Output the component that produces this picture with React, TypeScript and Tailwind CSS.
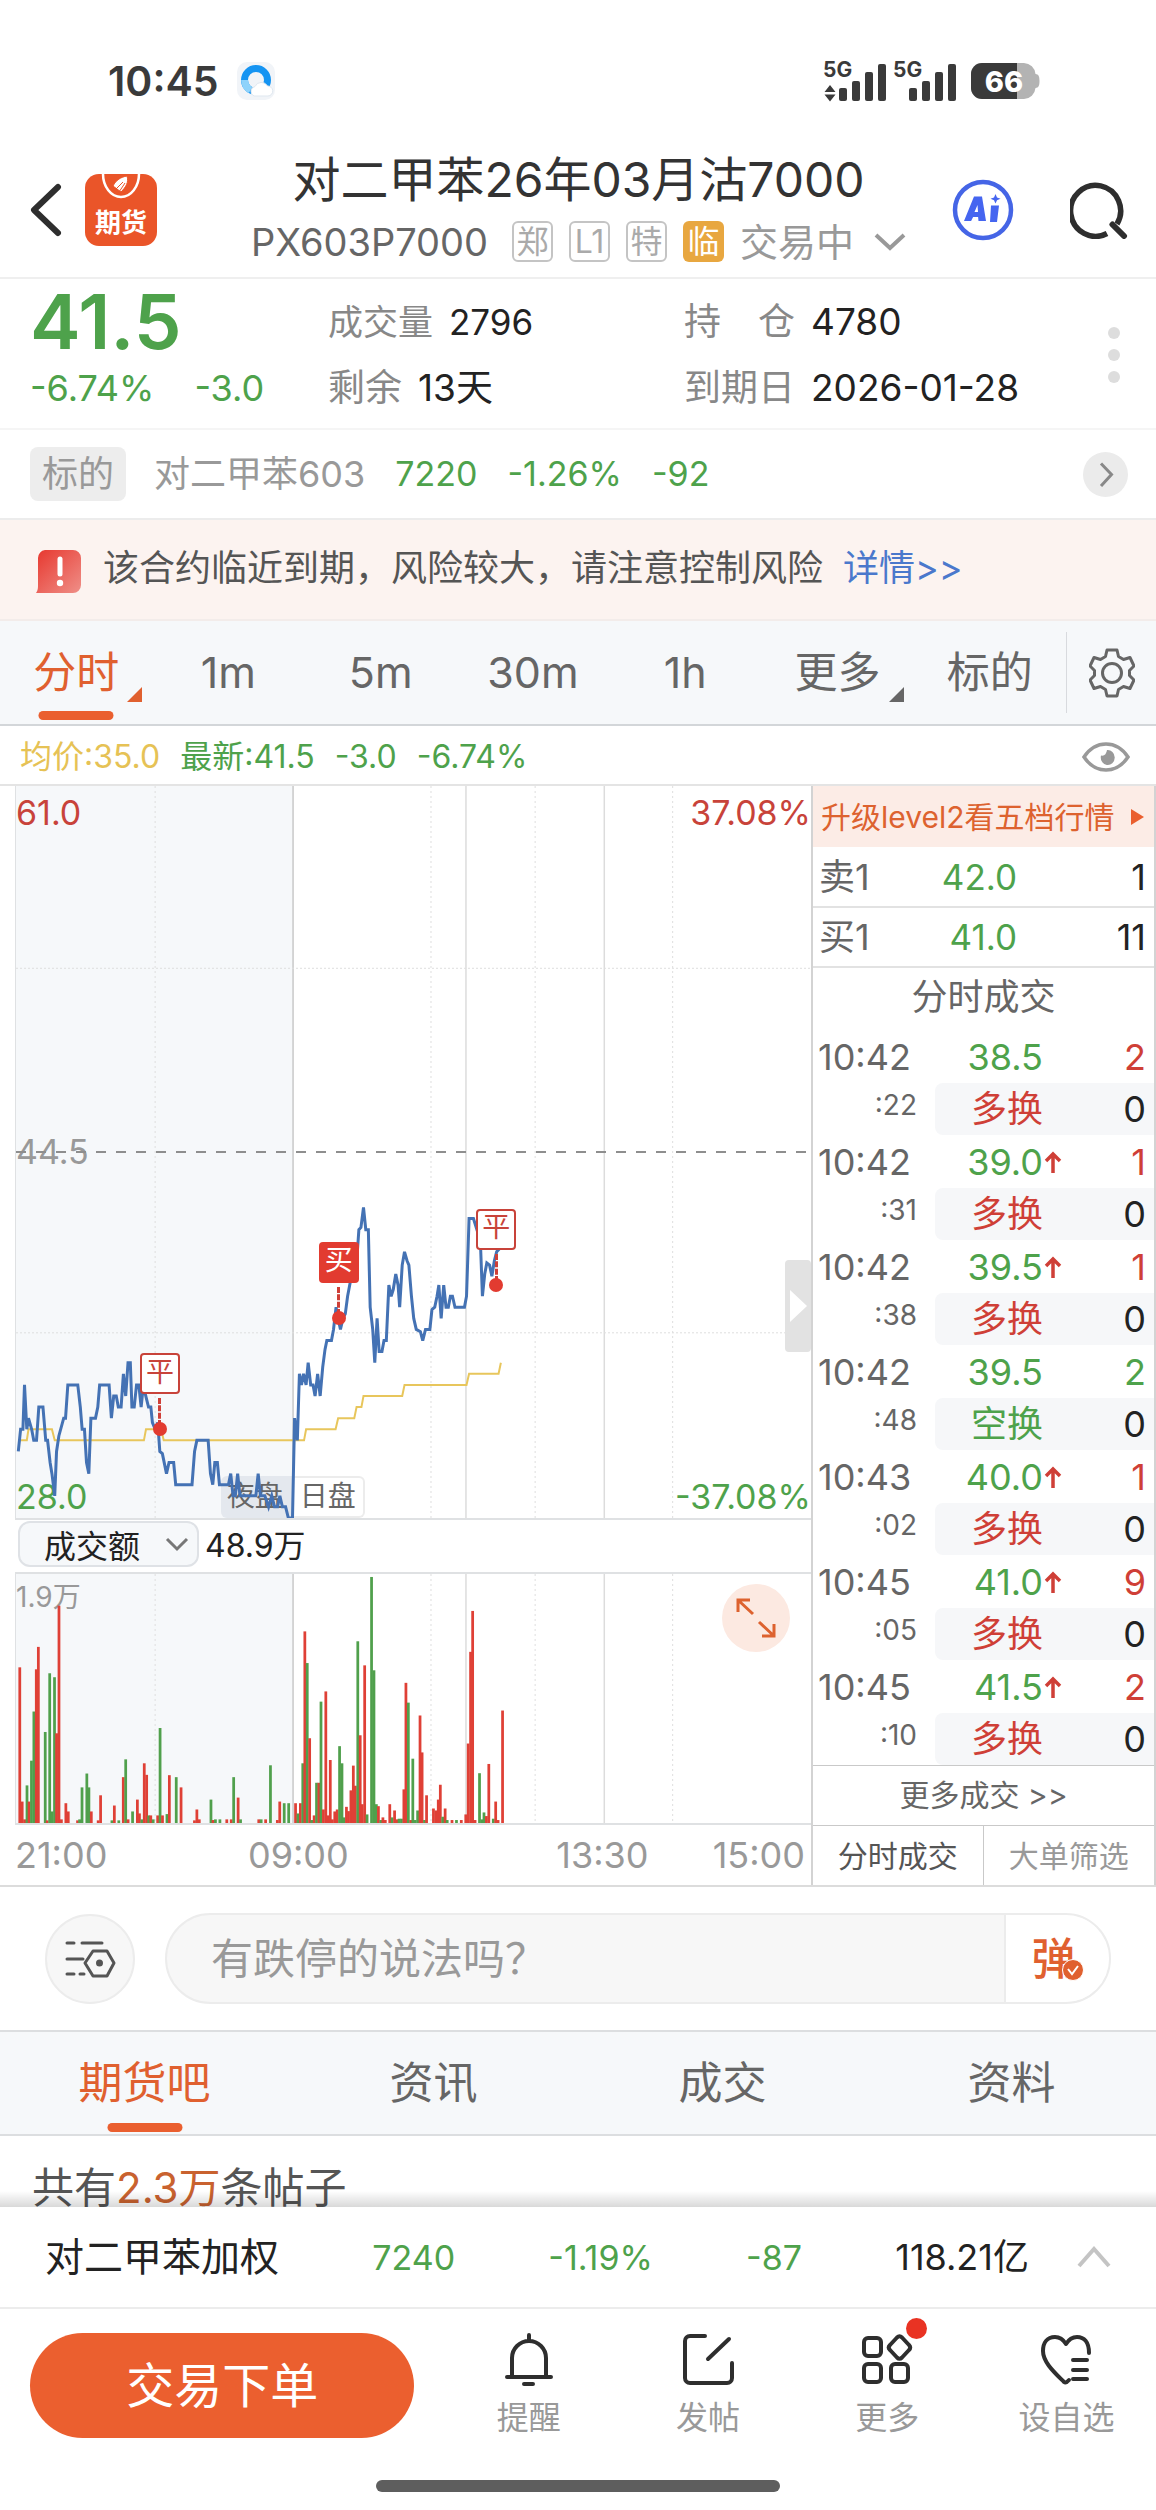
import React from "react";

type Point = [number, number];

const SESSION_MINUTES = 345;
const PRICE_LOW = 28;
const PRICE_HIGH = 61;

// [minute since the night open, price]
const prices: Point[] = [
  [1, 31], [2, 32], [3, 32], [3.7, 34], [4.7, 32], [5.4, 32.5], [6.8, 32], [7.7, 31.5], [8.9, 31.5], [9.9, 33],
  [11.7, 33], [12.9, 31.5], [13.7, 31.5], [14.8, 30.5], [15.6, 30], [16.8, 29], [17.6, 31], [18.6, 31.7], [20.7, 32.5],
  [21.5, 32.5], [22.5, 34], [26.8, 34], [27.9, 33], [28.7, 32], [29.7, 32], [30.6, 30.5], [31.6, 30], [32.5, 32.5],
  [34.5, 32.5], [35.5, 33], [36.3, 34], [40.4, 34], [41.4, 32.5], [42.4, 33.5], [43.5, 33.5], [44.4, 33], [45.6, 33],
  [46.6, 34.5], [47.6, 33.5], [48.6, 35], [49.6, 35], [50.3, 33], [51.3, 33], [52.3, 34], [53.3, 34], [54.3, 33],
  [55.3, 34], [56.3, 33.5], [57.5, 33], [58.5, 33], [59.2, 32.3], [60.4, 32], [61.5, 32.3], [62.4, 31], [63.5, 30.9],
  [65.3, 30], [66.4, 30.5], [68.4, 30.5], [69.3, 29.5], [76.4, 29.5], [77.5, 31], [78.5, 31.5], [83.4, 31.5],
  [84.4, 30], [85.4, 29.5], [86.3, 30.5], [87.4, 30.5], [88.3, 29.5], [92.2, 29.5], [93.2, 30], [94.2, 29], [95.2, 29],
  [96.2, 30], [97.2, 29], [104.1, 29], [105.1, 30], [106.1, 29], [108, 29], [109.6, 28.5], [111, 29], [112.2, 28.5],
  [113.5, 28.5], [114.5, 29], [115.6, 28.5], [117, 28.5], [118.2, 28], [120, 28], [120.9, 32.5], [122.1, 31.5],
  [123, 34.5], [123.9, 34], [124.8, 34.5], [125.9, 34], [126.8, 35], [127.9, 34], [128.9, 34], [129.8, 33.5],
  [130.9, 34.5], [132, 33.5], [133.1, 34.8], [134.1, 35.6], [134.9, 36], [136.9, 36], [137.8, 36.5], [138.9, 37.5],
  [139.8, 37], [140.8, 36.5], [141.9, 37], [142.9, 37.2], [143.9, 38], [145, 38.6], [146, 39.5], [147.8, 39.5],
  [148.8, 41], [149.7, 41.1], [150.8, 42], [151.8, 41], [152.9, 41], [153.7, 37.5], [154.8, 36.5], [155.7, 35],
  [156.7, 37], [157.6, 35.5], [158.8, 35.5], [159.7, 36], [160.7, 36], [161.8, 38.5], [162.8, 38], [163.7, 38.3],
  [164.8, 39], [165.8, 38.5], [166.5, 37.5], [167.6, 39.4], [168.6, 40], [169.7, 39.6], [170.5, 39.4], [171.6, 38],
  [172.6, 37], [173.7, 36.5], [175.5, 36.4], [176.5, 36], [177.7, 36.5], [179.6, 36.5], [180.5, 37.4], [181.7, 37.5],
  [182.7, 38], [183.5, 38.5], [184.5, 37], [185.6, 38.5], [186.6, 37.5], [187.6, 37.5], [188.5, 38], [189.4, 38],
  [190.5, 37.5], [194.6, 37.5], [195.5, 38], [196.6, 41.5], [198.5, 41.5], [201.5, 40.5], [202.4, 38], [203.4, 39],
  [204.3, 39.5], [205.5, 39.4], [206.5, 38.9], [207.6, 39.6], [208.6, 40], [209.5, 40.1], [210.4, 41.5],
];

const averages: Point[] = [
  [1, 31.5], [4.7, 31.5], [5.4, 32], [15.6, 32], [16.8, 31.5], [55.5, 31.5], [56.4, 32], [63, 32], [64.1, 31.5],
  [125, 31.5], [125.9, 32], [138.7, 32], [139.8, 32.5], [146.8, 32.5], [147.8, 33], [149.9, 33], [150.8, 33.5],
  [167.6, 33.5], [168.6, 34], [195.5, 34], [196.6, 34.5], [209.4, 34.5], [210.4, 35],
];

// x, top, direction on a 2312 x 755 canvas whose origin is at (45, 216)
const turnover =
  "56,499,r;63,906,r;70,960,r;77,857,g;83,906,r;90,782,g;97,633,g;104,505,r;110,437,r;130,695,g;136,963,r;143,517,g;150,936,g;157,529,g;163,699,r;170,312,r;177,960,r;190,911,r;197,936,r;224,963,r;230,960,g;237,863,g;251,821,g;257,863,g;264,936,r;284,963,r;291,887,r;324,963,g;331,918,r;344,963,g;357,832,r;364,778,g;371,960,r;384,936,g;398,900,r;404,942,r;411,960,g;418,790,r;425,825,r;431,948,g;437,948,r;444,960,g;457,948,r;464,683,g;471,948,r;484,944,g;491,826,r;511,832,g;525,863,r;564,963,r;571,930,r;578,960,r;612,900,g;618,962,r;625,960,g;638,960,g;658,960,r;671,960,r;678,832,g;691,894,r;698,960,g;751,960,r;758,960,g;771,960,r;785,796,g;805,962,r;812,906,r;825,911,g;838,911,g;858,911,r;865,942,g;872,911,r;879,790,g;885,390,r;892,486,g;899,714,r;905,962,g;912,948,r;919,849,g;926,849,r;932,603,g;939,930,r;946,572,r;952,948,r;959,780,r;965,960,r;972,936,r;979,930,r;986,738,g;993,790,g;999,954,g;1006,922,r;1012,935,r;1019,872,r;1026,797,r;1032,858,r;1039,420,g;1046,705,r;1052,914,r;1059,493,r;1066,945,g;1079,225,g;1086,508,g;1093,914,g;1099,920,r;1106,962,g;1112,954,r;1119,962,r;1132,914,r;1139,954,g;1146,933,r;1152,960,r;1159,958,g;1166,958,g;1173,869,r;1179,546,r;1186,606,g;1193,962,r;1199,776,g;1206,962,g;1213,933,g;1220,645,r;1226,757,r;1233,962,g;1239,887,r;1259,927,r;1266,933,r;1273,900,r;1279,855,r;1286,952,g;1293,927,r;1299,962,g;1313,962,r;1326,962,g;1340,962,r;1353,945,r;1360,730,r;1367,452,r;1373,328,r;1380,962,r;1393,820,g;1400,960,g;1406,939,g;1413,950,r;1420,792,r;1433,958,g;1440,906,r;1447,962,r;1460,630,r";

const trades = [
  { time: "10:42", sec: ":22", price: "38.5", up: false, vol: "2", buy: true, kind: "多换" },
  { time: "10:42", sec: ":31", price: "39.0", up: true, vol: "1", buy: true, kind: "多换" },
  { time: "10:42", sec: ":38", price: "39.5", up: true, vol: "1", buy: true, kind: "多换" },
  { time: "10:42", sec: ":48", price: "39.5", up: false, vol: "2", buy: false, kind: "空换" },
  { time: "10:43", sec: ":02", price: "40.0", up: true, vol: "1", buy: true, kind: "多换" },
  { time: "10:45", sec: ":05", price: "41.0", up: true, vol: "9", buy: true, kind: "多换" },
  { time: "10:45", sec: ":10", price: "41.5", up: true, vol: "2", buy: true, kind: "多换" },
];

const toPath = (pts: Point[]) =>
  pts
    .map(([m, p]) => `${((m / SESSION_MINUTES) * 1000).toFixed(1)},${(((PRICE_HIGH - p) / (PRICE_HIGH - PRICE_LOW)) * 1000).toFixed(1)}`)
    .join(" ");

function StatusBar() {
  return (
    <div className="flex h-[126px] items-center justify-between pt-9 pr-[116px] pl-[108px] text-[#3a3a3a]">
      <div className="flex items-center gap-[18px]">
        <span className="text-[41px] leading-none font-semibold">10:45</span>
        <svg width="38" height="38" viewBox="0 0 38 38" aria-hidden="true">
          <rect width="38" height="38" rx="10" fill="#f1f4f8" />
          <circle cx="19" cy="18" r="11.5" fill="none" stroke="#1594f2" strokeWidth="7" />
          <path d="M7.6 18a11.5 11.5 0 0 0 6 10" fill="none" stroke="#8fd3fb" strokeWidth="7" />
          <path d="M17 34a5 5 0 0 1 1-9.500a7 7 0 0 1 12.500-.5a5 5 0 0 1 .5 10z" fill="#fff" stroke="#dfe7ef" />
        </svg>
      </div>
      <div className="flex items-center">
        <svg width="134" height="46" viewBox="0 0 134 46" fill="#3a3a3a" aria-hidden="true">
          <text x="0" y="19" fontSize="21" fontWeight="700">5G</text>
          <path d="M1.500 34 7 27l5.500 7zM1.500 36.500h11L7 43.500z" />
          <rect x="16" y="30" width="8" height="13" rx="2" />
          <rect x="29" y="23" width="8" height="20" rx="2" />
          <rect x="42" y="14" width="8" height="29" rx="2" />
          <rect x="55" y="6" width="8" height="37" rx="2" />
          <text x="70" y="19" fontSize="21" fontWeight="700">5G</text>
          <rect x="86" y="30" width="8" height="13" rx="2" />
          <rect x="99" y="23" width="8" height="20" rx="2" />
          <rect x="112" y="14" width="8" height="29" rx="2" />
          <rect x="125" y="6" width="8" height="37" rx="2" />
        </svg>
        <svg className="ml-[13px]" width="70" height="38" viewBox="0 0 70 38" aria-hidden="true">
          <path d="M12 1h42a12 12 0 0 1 11.500 11c3 .5 4 2 4 7s-1 6.500-4 7A12 12 0 0 1 54 37H12A11 11 0 0 1 1 26V12A11 11 0 0 1 12 1z" fill="#b3b3b3" />
          <path d="M12 1h35v36H12A11 11 0 0 1 1 26V12A11 11 0 0 1 12 1z" fill="#3a3a3a" />
          <text x="34" y="30" fontSize="29" fontWeight="800" fill="#fff" textAnchor="middle">66</text>
        </svg>
      </div>
    </div>
  );
}

function Tag({ children }: { children: React.ReactNode }) {
  return (
    <span className="flex size-[41px] items-center justify-center rounded-[6px] border-2 border-[#c4c4c4] text-[32px] leading-none text-[#aaa]">
      {children}
    </span>
  );
}

function Header() {
  return (
    <header className="flex h-[153px] items-center border-b-2 border-[#efefef] pr-7 pl-[30px]">
      <button aria-label="返回" className="pt-4">
        <svg width="32" height="54" viewBox="0 0 32 54" fill="none" stroke="#2e2e2e" strokeWidth="6" strokeLinecap="round" strokeLinejoin="round">
          <path d="M28 4 4 27l24 23" />
        </svg>
      </button>
      <a href="#futures" aria-label="期货" className="mt-4 ml-[23px] flex h-[72px] w-[72px] flex-col items-center rounded-[14px] bg-[#ea5529]">
        <svg width="44" height="28" viewBox="0 0 44 28" fill="none" aria-hidden="true">
          <path d="M4 0a18 23 0 0 0 36 0" stroke="#fff" strokeWidth="2.5" />
          <path d="M14 12c3-6 8-9 14-10 2 6-1 11-6 16zM20 18l6-9M17 15l7-7" fill="#fff" stroke="#ea5529" strokeWidth="1" />
        </svg>
        <span className="pt-1 text-[26px] leading-[34px] font-bold text-white">期货</span>
      </a>
      <div className="flex flex-1 flex-col items-center pt-[18px] pl-12">
        <h1 className="text-[48px] leading-[62px] whitespace-nowrap text-[#333]">对二甲苯26年03月沽7000</h1>
        <div className="flex items-center gap-4 leading-[62px]">
          <span className="mr-2 text-[38px] text-[#666]">PX603P7000</span>
          <Tag>郑</Tag>
          <Tag>L1</Tag>
          <Tag>特</Tag>
          <span className="flex size-[41px] items-center justify-center rounded-[6px] bg-[#e8a740] text-[32px] leading-none text-white">临</span>
          <button className="flex items-center gap-5 text-[38px] text-[#999]">
            交易中
            <svg width="32" height="20" viewBox="0 0 32 20" fill="none" stroke="#999" strokeWidth="4" aria-hidden="true">
              <path d="m2 3 14 13L30 3" />
            </svg>
          </button>
        </div>
      </div>
      <button aria-label="AI" className="pt-4">
        <svg width="62" height="62" viewBox="0 0 62 62" aria-hidden="true">
          <circle cx="31" cy="31" r="28" fill="none" stroke="#4565e6" strokeWidth="4.5" />
          <path fillRule="evenodd" fill="#4565f0" d="M22 17.500h8l4 24.500h-7.500l-.4-4h-5l-2 4H12zM25.500 26l-3 7h3.500z" />
          <path d="M39 26.500h8l-2 16.500h-7zM43.500 15l1.500 3.500 3.500 1.200-3.500 1.500-1.500 3.300-1.500-3.300-3.500-1.500 3.500-1.200z" fill="#4565f0" />
        </svg>
      </button>
      <button aria-label="搜索" className="ml-14 pt-4">
        <svg width="58" height="58" viewBox="0 0 58 58" fill="none" stroke="#2e2e2e" strokeWidth="5.5" strokeLinecap="butt" aria-hidden="true">
          <path d="M37 52.500A25 25.500 0 1 1 47 43" />
          <path d="M42.500 43.500 54 55" strokeWidth="6" strokeLinecap="round" />
        </svg>
      </button>
    </header>
  );
}

function Stat({ label, value, compact }: { label: string; value: string; compact?: boolean }) {
  return (
    <div className={compact ? "flex gap-4 text-[35px] whitespace-pre" : "flex gap-4 text-[37px] whitespace-pre"}>
      <dt className="text-[#888]">{label}</dt>
      <dd className="text-[#222]">{value}</dd>
    </div>
  );
}

function Quote() {
  return (
    <section className="flex items-start border-b-2 border-[#f5f5f5] pr-9 pb-[7px] pl-[30px] text-[36px] leading-[66px]">
      <div className="w-[298px] text-[#4ea24b]">
        <p className="h-[78px] text-[76px] leading-[84px] font-semibold">41.5</p>
        <p className="flex gap-10 leading-[62px]">
          <span>-6.74%</span>
          <span>-3.0</span>
        </p>
      </div>
      <dl className="grid flex-1 grid-cols-[356fr_424fr] pt-[10px]">
        <Stat label="成交量" value="2796" compact />
        <Stat label="持　仓" value="4780" />
        <Stat label="剩余" value="13天" />
        <Stat label="到期日" value="2026-01-28" />
      </dl>
      <button aria-label="更多信息" className="mt-12 flex flex-col gap-[10px]">
        <i className="size-3 rounded-full bg-[#ddd]" />
        <i className="size-3 rounded-full bg-[#ddd]" />
        <i className="size-3 rounded-full bg-[#ddd]" />
      </button>
    </section>
  );
}

function Underlying() {
  return (
    <a href="#underlying" className="flex h-[90px] items-center border-b-2 border-[#ececec] pr-7 pl-[30px] text-[34px] leading-[54px] text-[#4ea24b]">
      <span className="rounded-[8px] bg-[#ededed] px-3 text-[36px] text-[#999]">标的</span>
      <span className="ml-7 text-[36px] text-[#999]">对二甲苯603</span>
      <span className="ml-[30px]">7220</span>
      <span className="ml-[30px]">-1.26%</span>
      <span className="ml-[30px]">-92</span>
      <svg className="ml-auto" width="45" height="45" viewBox="0 0 45 45" fill="none" aria-hidden="true">
        <circle cx="22.5" cy="22.5" r="22.5" fill="#ebebeb" />
        <path d="m18 11.500 10.500 11L18 34" stroke="#888" strokeWidth="3" />
      </svg>
    </a>
  );
}

function Warning() {
  return (
    <div className="flex h-[101px] items-center border-b-2 border-[#f3ecea] bg-[#fcf3f0] pr-4 pb-1 pl-9 text-[36px] leading-[54px]">
      <svg className="mt-2 shrink-0" width="45" height="43" viewBox="0 0 45 43" aria-hidden="true">
        <defs>
          <linearGradient id="alert" x1="0" y1="0" x2="1" y2="1">
            <stop offset="0" stopColor="#e7372e" />
            <stop offset="1" stopColor="#ef8f88" />
          </linearGradient>
        </defs>
        <path d="M9 0h28a8 8 0 0 1 8 8v27a8 8 0 0 1-8 8H0c2-3 2-5 2-8V8a8 8 0 0 1 7-8z" fill="url(#alert)" />
        <path d="M24 9v15" stroke="#fff" strokeWidth="5" strokeLinecap="round" />
        <circle cx="24" cy="33" r="3.2" fill="#fff" />
      </svg>
      <p className="ml-[22px] whitespace-nowrap text-[#555]">
        该合约临近到期，风险较大，请注意控制风险
        <a href="#detail" className="ml-5 text-[#4a78cc]">详情&gt;&gt;</a>
      </p>
    </div>
  );
}

const periods = ["分时", "1m", "5m", "30m", "1h", "更多", "标的"];

function PeriodTabs() {
  return (
    <nav className="flex h-[105px] items-center border-b-2 border-[#d3d6d9] bg-[#f6f8fa] text-[43px] text-[#666]">
      <div className="grid h-full flex-1 grid-cols-7">
        {periods.map((p, i) => (
          <button key={p} className={i === 0 ? "relative text-[#e0602f]" : "relative"}>
            {p}
            {(i === 0 || i === 5) && (
              <svg className="absolute right-[10px] bottom-[22px]" width="15" height="15" viewBox="0 0 15 15" fill="currentColor" aria-hidden="true">
                <path d="M15 0v15H0z" />
              </svg>
            )}
            {i === 0 && <i className="absolute bottom-1 left-1/2 h-[9px] w-[75px] -translate-x-1/2 rounded-full bg-[#ea5f2f]" />}
          </button>
        ))}
      </div>
      <button aria-label="设置" className="flex h-[81px] w-[90px] items-center justify-center border-l border-[#d8dade]">
        <svg width="46" height="50" viewBox="0 0 46 50" fill="none" stroke="#666" strokeWidth="3" strokeLinejoin="round" aria-hidden="true">
          <path d="M18 2h10l1.500 6.500 5 3 6.500-2 4 8.500-4.500 4.500v5L45 32l-4 8.500-6.500-2-5 3L28 48H18l-1.500-6.500-5-3-6.500 2L1 32l4.500-4.500v-5L1 18l4-8.500 6.500 2 5-3z" />
          <circle cx="23" cy="25" r="9.5" />
        </svg>
      </button>
    </nav>
  );
}

function LegendRow() {
  return (
    <div className="flex h-[60px] items-center border-b-2 border-[#e4e4e4] pt-1 pr-[26px] pl-5 text-[32px] text-[#4ea24b]">
      <span className="text-[#e6c255]">均价:35.0</span>
      <span className="ml-5">最新:41.5</span>
      <span className="ml-5">-3.0</span>
      <span className="ml-5">-6.74%</span>
      <button aria-label="显示设置" className="ml-auto">
        <svg width="48" height="30" viewBox="0 0 48 30" fill="none" aria-hidden="true">
          <path d="M2 15C8 6 15 2 24 2s16 4 22 13c-6 9-13 13-22 13S8 24 2 15z" stroke="#999" strokeWidth="3.5" />
          <path d="M25 8a7 7.500 0 1 1-6 5.500q5 1 6-5.500z" fill="#999" />
        </svg>
      </button>
    </div>
  );
}

function GridLines() {
  const solid = [566, 740];
  const dotted = [175, 522, 653, 826];
  return (
    <g>
      {dotted.map((x) => (
        <line key={x} x1={x} x2={x} y1="0" y2="1000" stroke="#dedede" strokeWidth="1" strokeDasharray="2 3" vectorEffect="non-scaling-stroke" />
      ))}
      {solid.map((x) => (
        <line key={x} x1={x} x2={x} y1="0" y2="1000" stroke="#dcdcdc" strokeWidth="1.5" vectorEffect="non-scaling-stroke" />
      ))}
      <line x1="348.5" x2="348.5" y1="0" y2="1000" stroke="#c9c9c9" strokeWidth="1.5" vectorEffect="non-scaling-stroke" />
    </g>
  );
}

function Marker({ label, filled, place }: { label: string; filled?: boolean; place: string }) {
  return (
    <div className={`absolute flex w-10 -translate-x-1/2 -translate-y-full flex-col items-center ${place}`}>
      <span
        className={
          filled
            ? "flex h-[41px] w-10 items-center justify-center rounded-[4px] bg-[#e23b30] pb-1 text-[28px] leading-none text-white"
            : "flex h-[41px] w-10 items-center justify-center rounded-[4px] border-2 border-[#c8433a] bg-white pb-1 text-[28px] leading-none text-[#c8433a]"
        }
      >
        {label}
      </span>
      <i className="mt-1 h-7 border-l-[3px] border-dashed border-[#cf3f37]" />
      <i className="-mt-1 size-[14px] rounded-full bg-[#e23b30]" />
    </div>
  );
}

function PriceChart() {
  return (
    <div className="relative h-[734px] border-b-2 border-l border-[#dfe1e3] text-[34px] leading-none">
      <svg className="absolute inset-0 h-full w-full" viewBox="0 0 1000 1000" preserveAspectRatio="none" aria-hidden="true">
        <rect width="348.5" height="1000" fill="#f6f8fa" />
        <GridLines />
        {[249, 747].map((y) => (
          <line key={y} x1="0" x2="1000" y1={y} y2={y} stroke="#dedede" strokeWidth="1" strokeDasharray="2 2" vectorEffect="non-scaling-stroke" />
        ))}
      </svg>
      <div className="absolute bottom-0 left-[34.8%] flex h-[42px] -translate-x-1/2 text-center text-[28px] leading-[40px] text-[#666]">
        <span className="w-[72px] rounded-l-[6px] bg-[#e4e8ee] pr-1">夜盘</span>
        <span className="w-[72px] rounded-r-[6px] border-2 border-l-0 border-[#ececec] bg-white leading-[36px]">日盘</span>
      </div>
      <span className="absolute top-[10px] left-0 text-[#c8433a]">61.0</span>
      <span className="absolute top-[10px] right-0 text-[#c8433a]">37.08%</span>
      <span className="absolute top-1/2 left-0 -translate-y-1/2 text-[#999]">44.5</span>
      <span className="absolute bottom-1 left-0 text-[#4ea24b]">28.0</span>
      <span className="absolute right-0 bottom-1 text-[#4ea24b]">-37.08%</span>
      <svg className="absolute inset-0 h-full w-full" viewBox="0 0 1000 1000" preserveAspectRatio="none" role="img" aria-label="分时走势">
        <line x1="0" x2="1000" y1="500" y2="500" stroke="#8e8e8e" strokeWidth="2" strokeDasharray="10 10" vectorEffect="non-scaling-stroke" />
        <polyline points={toPath(averages)} fill="none" stroke="#e8c65c" strokeWidth="2" vectorEffect="non-scaling-stroke" />
        <polyline points={toPath(prices)} fill="none" stroke="#4472b4" strokeWidth="3" vectorEffect="non-scaling-stroke" />
      </svg>
      <Marker label="平" place="left-[18.1%] top-[88.8%]" />
      <Marker label="买" filled place="left-[40.6%] top-[73.6%]" />
      <Marker label="平" place="left-[60.4%] top-[69.1%]" />
      <button aria-label="收起盘口" className="absolute top-[474px] right-0 flex h-[92px] w-[26px] items-center justify-center rounded-[4px] bg-[#e2e2e2]">
        <svg width="17" height="32" viewBox="0 0 17 32" fill="#fff" aria-hidden="true">
          <path d="M0 0v32l17-16z" />
        </svg>
      </button>
    </div>
  );
}

function TurnoverChart() {
  return (
    <div className="relative h-[253px] border-y-2 border-l border-[#dfe1e3]">
      <svg className="absolute inset-0 h-full w-full" viewBox="0 0 1000 1000" preserveAspectRatio="none" aria-hidden="true">
        <rect width="348.5" height="1000" fill="#f6f8fa" />
        <GridLines />
      </svg>
      <span className="absolute top-1 left-0 text-[28px] leading-[38px] text-[#999]">1.9万</span>
      <svg className="absolute inset-0 h-full w-full" viewBox="45 216 2312 755" preserveAspectRatio="none" role="img" aria-label="成交额">
        {turnover.split(";").map((bar) => {
          const [x, top, dir] = bar.split(",");
          return <rect key={x} x={Number(x) - 4} y={top} width="8" height={971 - Number(top)} fill={dir === "r" ? "#df4036" : "#50a04c"} />;
        })}
      </svg>
      <button aria-label="全屏" className="absolute top-[10px] right-[21px] flex size-[68px] items-center justify-center rounded-full bg-[#fce9e1]">
        <svg width="42" height="42" viewBox="0 0 42 42" fill="none" stroke="#dd622f" strokeWidth="3" aria-hidden="true">
          <path d="M3 15V3h12M3 3l15 14M39 27v12H27M39 39 24 25" />
        </svg>
      </button>
    </div>
  );
}

function OrderPanel() {
  return (
    <aside className="flex flex-col border-x-2 border-[#d3d3d3] text-[36px] leading-[50px] text-[#222]">
      <a href="#level2" className="flex h-[61px] items-center justify-between bg-[#fcece6] pr-[10px] pl-2 text-[30px] whitespace-nowrap text-[#dd622f]">
        升级level2看五档行情
        <svg width="13" height="16" viewBox="0 0 13 16" fill="#ea5f2f" aria-hidden="true">
          <path d="M0 0v16l13-8z" />
        </svg>
      </a>
      <table className="w-full table-fixed">
        <tbody>
          {[["卖1", "42.0", "1"], ["买1", "41.0", "11"]].map(([side, price, vol]) => (
            <tr key={side} className="h-[60px] border-b-2 border-[#e2e2e2]">
              <th scope="row" className="w-[100px] pl-[6px] text-left font-normal text-[#666]">{side}</th>
              <td className="w-[104px] text-right text-[35px] text-[#4ea24b]">{price}</td>
              <td className="pr-2 text-right">{vol}</td>
            </tr>
          ))}
        </tbody>
      </table>
      <h2 className="pb-1 text-center leading-[58px] text-[#666]">分时成交</h2>
      <table className="w-full">
        <tbody>
          {trades.map((t, i) => (
            <React.Fragment key={i}>
              <tr className="h-[53px]">
                <td className="w-[122px] pl-[5px] text-[#666]">{t.time}</td>
                <td className="relative w-[108px] text-right text-[#4ea24b]">
                  {t.price}
                  {t.up && (
                    <svg className="absolute top-4 left-full ml-px" width="18" height="22" viewBox="0 0 18 22" fill="none" stroke="#cf3f37" strokeWidth="3.5" aria-label="上涨">
                      <path d="M9 22V3M2 10l7-7 7 7" />
                    </svg>
                  )}
                </td>
                <td className={t.buy ? "pr-2 text-right text-[#cf3f37]" : "pr-2 text-right text-[#4ea24b]"}>{t.vol}</td>
              </tr>
              <tr className="h-[52px]">
                <td className="pr-[18px] text-right text-[28px] leading-[42px] text-[#666]">
                  <span className="block pb-2">{t.sec}</span>
                </td>
                <td className={t.buy ? "rounded-l-[8px] bg-[#f6f7f9] text-right text-[#cf3f37]" : "rounded-l-[8px] bg-[#f6f7f9] text-right text-[#4ea24b]"}>{t.kind}</td>
                <td className="bg-[#f6f7f9] pr-2 text-right">0</td>
              </tr>
            </React.Fragment>
          ))}
        </tbody>
      </table>
      <a href="#trades" className="border-t border-[#c9c9c9] text-center text-[30px] leading-[59px] text-[#666]">更多成交 &gt;&gt;</a>
      <div className="grid flex-1 grid-cols-2 border-t border-[#c9c9c9] text-[30px]">
        <button className="border-r border-[#c9c9c9] text-[#555]">分时成交</button>
        <button className="text-[#999]">大单筛选</button>
      </div>
    </aside>
  );
}

function Market() {
  return (
    <section className="grid grid-cols-[811fr_345fr] border-b-2 border-[#dcdcdc]">
      <div className="flex flex-col pl-[15px]">
        <PriceChart />
        <div className="flex h-[52px] items-center gap-[6px] text-[32px] text-[#222]">
          <div className="relative ml-[3px]">
            <select aria-label="副图指标" className="h-[46px] w-[181px] appearance-none rounded-[12px] border-2 border-[#dfe2e6] bg-[#f6f8fa] pl-6">
              <option>成交额</option>
            </select>
            <svg className="pointer-events-none absolute top-4 right-[10px]" width="24" height="15" viewBox="0 0 24 15" fill="none" stroke="#777" strokeWidth="3" aria-hidden="true">
              <path d="m2 2 10 10L22 2" />
            </svg>
          </div>
          <span>48.9万</span>
        </div>
        <TurnoverChart />
        <div className="relative flex h-[60px] items-center justify-between pr-[6px] text-[36px] text-[#999]">
          <span>21:00</span>
          <span className="absolute left-[35.6%] -translate-x-1/2">09:00</span>
          <span className="absolute left-[73.8%] -translate-x-1/2">13:30</span>
          <span>15:00</span>
        </div>
      </div>
      <OrderPanel />
    </section>
  );
}

function CommentBar() {
  return (
    <div className="flex items-center gap-[30px] border-b-2 border-[#dcdee0] px-[45px] py-[26px]">
      <button aria-label="弹幕设置" className="flex size-[90px] shrink-0 items-center justify-center rounded-full border-2 border-[#ececec] bg-[#f7f7f7]">
        <svg width="52" height="38" viewBox="0 0 52 38" fill="none" stroke="#555" strokeWidth="3" strokeLinecap="round" strokeLinejoin="round" aria-hidden="true">
          <path d="M3 3h7M18 3h20M3 19h16M3 34h7M16 34h4" />
          <path d="M29 11h14l7 12-7 13H29l-8-13z" />
          <circle cx="35.5" cy="23" r="2" fill="#555" />
        </svg>
      </button>
      <div className="flex h-[91px] min-w-0 flex-1 overflow-hidden rounded-full border-2 border-[#ececec] bg-[#f7f7f7]">
        <input aria-label="评论" placeholder="有跌停的说法吗？" className="min-w-0 flex-1 bg-transparent pl-11 text-[42px] placeholder:text-[#999]" />
        <button aria-label="弹幕" className="relative w-[105px] border-l-2 border-[#ececec] bg-white pr-2 text-[44px] font-medium text-[#e0602f]">
          弹
          <svg className="absolute right-[25px] bottom-[21px]" width="22" height="22" viewBox="0 0 22 22" aria-hidden="true">
            <circle cx="11" cy="11" r="10.5" fill="#e0602f" stroke="#fff" />
            <path d="m6 10 4 5 6-8" fill="none" stroke="#fff" strokeWidth="2" />
          </svg>
        </button>
      </div>
    </div>
  );
}

function ContentTabs() {
  return (
    <nav className="grid h-[104px] grid-cols-4 border-b-2 border-[#dcdee0] bg-[#f6f8fa] text-[44px] text-[#666]">
      {["期货吧", "资讯", "成交", "资料"].map((t, i) => (
        <button key={t} className={i === 0 ? "relative text-[#e0602f]" : "relative"}>
          {t}
          {i === 0 && <i className="absolute bottom-[2px] left-1/2 h-[9px] w-[75px] -translate-x-1/2 rounded-full bg-[#ea5f2f]" />}
        </button>
      ))}
    </nav>
  );
}

function IndexRow() {
  return (
    <a href="#index" className="flex h-[102px] items-center border-b-2 border-[#ececec] bg-white px-[45px] text-[#222]">
      <span className="flex flex-1 items-center justify-between text-[34px]">
        <span className="text-[39px]">对二甲苯加权</span>
        <span className="text-[#4ea24b]">7240</span>
        <span className="text-[#4ea24b]">-1.19%</span>
        <span className="text-[#4ea24b]">-87</span>
        <span className="text-[36px]">118.21亿</span>
      </span>
      <svg className="ml-12" width="34" height="22" viewBox="0 0 34 22" fill="none" stroke="#c4c4c4" strokeWidth="4" aria-hidden="true">
        <path d="M2 20 17 3l15 17" />
      </svg>
    </a>
  );
}

const actions = [
  {
    label: "提醒",
    icon: <path d="M26 2v5M9 43V25a17 17 0 0 1 34 0v18M4 44h44M21 51h9" />,
  },
  {
    label: "发帖",
    icon: <path d="M23 3H8a5 5 0 0 0-5 5v37a5 5 0 0 0 5 5h37a5 5 0 0 0 5-5V30M26 26 47 6" />,
  },
  {
    label: "更多",
    icon: (
      <>
        <rect x="3" y="5" width="17" height="18" rx="4" />
        <rect x="3" y="31" width="17" height="18" rx="4" />
        <rect x="30" y="31" width="17" height="18" rx="4" />
        <path d="M36 4.500q2.500-2.500 5 0l7 7.500q2.500 2.500 0 5l-7 7.500q-2.500 2.500-5 0L29 17q-2.500-2.500 0-5z" />
      </>
    ),
  },
  {
    label: "设自选",
    icon: (
      <>
        <path d="M49 20C49 9 44 4 37 4c-5 0-8 2-11 7C23 6 20 4 15 4 7 4 3 10 3 18c0 11 11 21 21 31q2 1.500 5-2" />
        <path d="M33 27h14M33 37h14M33 46h14" />
      </>
    ),
  },
];

function ActionBar() {
  return (
    <div className="flex items-start bg-white pt-6">
      <div className="w-[38%] pr-[25px] pl-[30px]">
        <button className="h-[105px] w-full rounded-full bg-[#eb5f2f] text-[48px] text-white">交易下单</button>
      </div>
      <div className="grid flex-1 grid-cols-4">
        {actions.map((a) => (
          <button key={a.label} className="relative flex flex-col items-center text-[32px] leading-[46px] text-[#999]">
            <svg className="mb-2" width="52" height="54" viewBox="0 0 52 54" fill="none" stroke="#2e2e2e" strokeWidth="4" strokeLinecap="round" strokeLinejoin="round" aria-hidden="true">
              {a.icon}
            </svg>
            {a.label}
            {a.label === "更多" && <i className="absolute -top-[15px] left-[108px] size-[21px] rounded-full bg-[#e93323]" />}
          </button>
        ))}
      </div>
    </div>
  );
}

export default function App() {
  return (
    <main className="flex min-h-screen flex-col bg-white font-['Inter','Noto_Sans_CJK_SC',sans-serif]">
      <StatusBar />
      <Header />
      <Quote />
      <Underlying />
      <Warning />
      <PeriodTabs />
      <LegendRow />
      <Market />
      <CommentBar />
      <ContentTabs />
      <div className="relative h-[71px] overflow-hidden pt-5 pl-8 text-[42px] leading-[64px] text-[#555]">
        共有<span className="text-[#c9622f]">2.3万</span>条帖子
        <i className="absolute inset-x-0 bottom-0 h-4 bg-linear-to-b from-transparent to-black/15" />
      </div>
      <IndexRow />
      <ActionBar />
      <div className="mx-auto mt-auto mb-[18px] h-3 w-[35%] rounded-full bg-[#5e5e5e]" />
    </main>
  );
}
